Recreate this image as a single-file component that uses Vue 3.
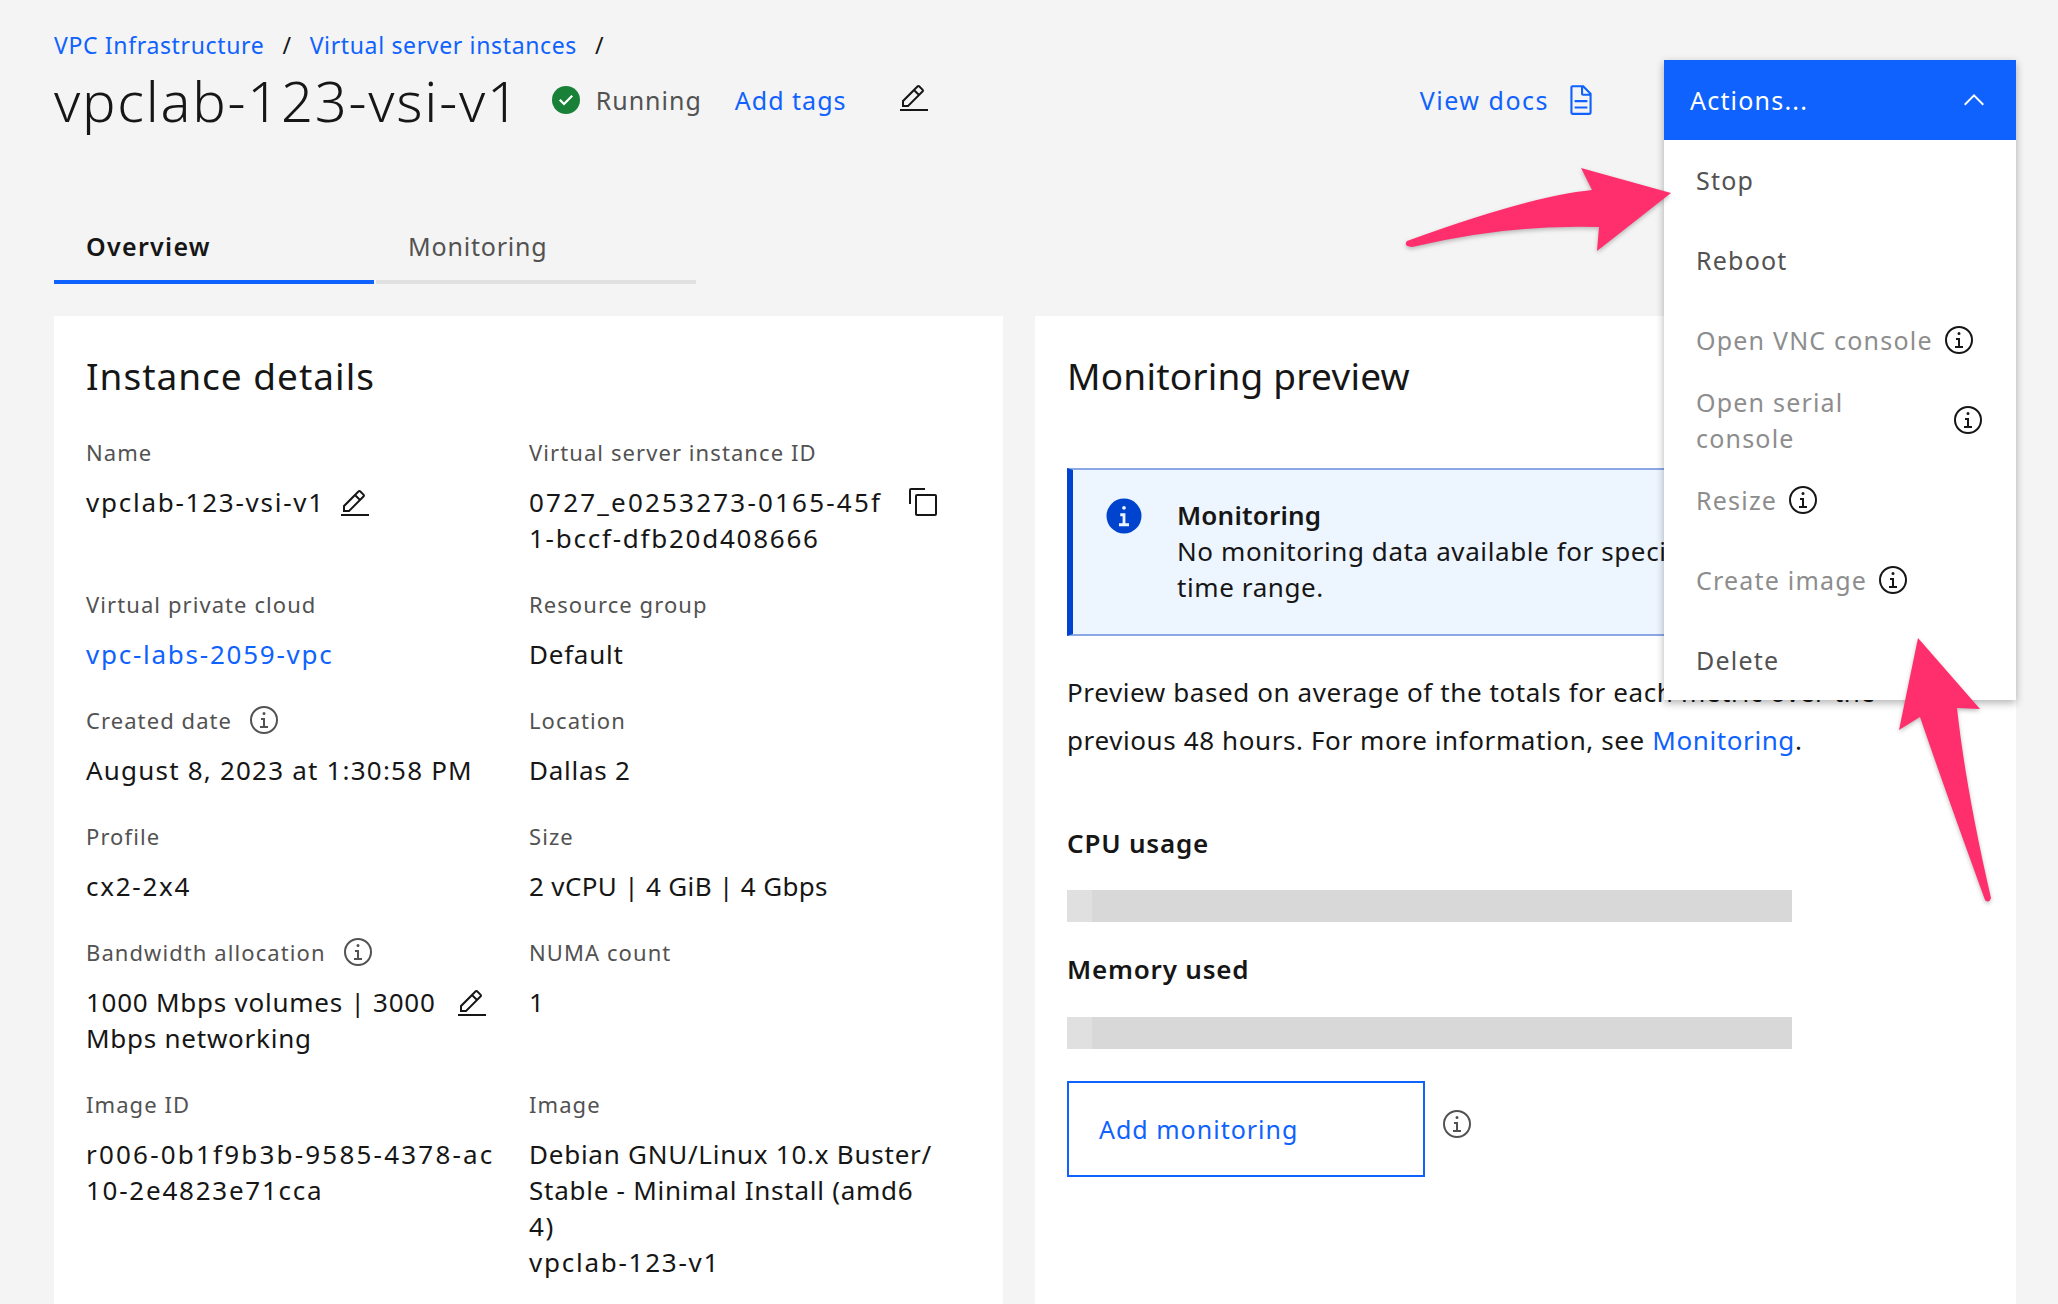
<template>
  <div class="page">
    <nav class="crumbs">
      <a>VPC Infrastructure</a><span class="sep">/</span><a>Virtual server instances</a><span class="sep">/</span>
    </nav>

    <div class="title-row">
      <h1>vpclab-123-vsi-v1</h1>
      <svg class="status-ic" viewBox="0 0 32 32">
        <circle cx="16" cy="16" r="14" fill="#198038" />
        <path fill="#fff" d="M14 21.5l-5-5 1.6-1.5 3.4 3.4 7.4-7.4 1.6 1.6z" />
      </svg>
      <span class="status">Running</span>
      <a class="tags">Add tags</a>
      <svg class="ic edit-top" viewBox="0 0 32 32"><path :d="icons.edit" /></svg>
      <a class="docs">View docs</a>
      <svg class="ic docs-ic" viewBox="0 0 32 32"><path :d="icons.doc" /></svg>
    </div>

    <div class="tabs">
      <div class="tab active">Overview</div>
      <div class="tab">Monitoring</div>
    </div>

    <div class="cards">
      <section class="card">
        <h2 class="h-wide">Instance details</h2>
        <div class="details">
          <div v-for="item in details" :key="item.label" class="field">
            <div class="label">
              {{ item.label }}
              <svg v-if="item.info" class="ic info-ic" viewBox="0 0 32 32"><path :d="icons.info" /></svg>
            </div>
            <div class="value" :class="{ link: item.link }">
              <template v-for="(line, i) in item.lines" :key="i">
                <br v-if="i > 0" /><span :class="item.tone || lineTone(line)">{{ line }}</span>
                <svg v-if="item.edit && i === 0" class="ic edit-ic" :class="item.edit" viewBox="0 0 32 32"><path :d="icons.edit" /></svg>
              </template>
              <svg v-if="item.copy" class="ic copy-ic" viewBox="0 0 32 32"><path :d="icons.copy" /></svg>
            </div>
          </div>
        </div>
      </section>

      <section class="card">
        <h2 class="h-narrow">Monitoring preview</h2>
        <div class="notice">
          <svg class="notice-ic" viewBox="0 0 32 32"><path :d="icons.infoFilled" /></svg>
          <div>
            <div class="notice-title">Monitoring</div>
            <div>No monitoring data available for specified<br />time range.</div>
          </div>
        </div>
        <p class="preview">
          Preview based on average of the totals for each metric over the<br />
          previous 48 hours. For more information, see <a>Monitoring</a>.
        </p>
        <h3 class="cpu">CPU usage</h3>
        <div class="bar"><span></span></div>
        <h3 class="mem">Memory used</h3>
        <div class="bar second"><span></span></div>
        <div class="add-row">
          <button class="add-btn">Add monitoring</button>
          <svg class="ic add-info" viewBox="0 0 32 32"><path :d="icons.info" /></svg>
        </div>
      </section>
    </div>

    <div class="dropdown">
      <div class="drop-head">
        <span>Actions...</span>
        <svg class="chev" viewBox="0 0 32 32"><path :d="icons.chevron" /></svg>
      </div>
      <div
        v-for="m in menu"
        :key="m.text"
        class="menu-item"
        :class="{ disabled: m.info, tall: m.tall }"
      >
        <span>{{ m.text }}<template v-if="m.tall"><br />{{ m.tall }}</template></span>
        <svg v-if="m.info" class="ic menu-ic" viewBox="0 0 32 32"><path :d="icons.info" /></svg>
      </div>
    </div>

    <svg class="arrows" viewBox="0 0 2058 1304">
      <path
        d="M1407 241 Q1530 196 1592 190 L1581 168 L1671 193 L1597 251 L1599 227 Q1510 224 1412 247 Q1403 246 1407 241 Z"
      />
      <path
        d="M1918 638 L1980 709 L1957 708 Q1966 790 1991 898 Q1989 904 1985 900 Q1945 790 1920 717 L1899 730 Z"
      />
    </svg>
  </div>
</template>

<script setup>
const icons = {
  info: 'M17 22v-8h-4v2h2v6h-3v2h8v-2h-3zM16 8a1.5 1.5 0 1 0 1.5 1.5A1.5 1.5 0 0 0 16 8zM16 30a14 14 0 1 1 14-14 14 14 0 0 1-14 14zm0-26a12 12 0 1 0 12 12A12 12 0 0 0 16 4z',
  infoFilled: 'M16 2a14 14 0 1 0 14 14A14 14 0 0 0 16 2zm0 6a1.5 1.5 0 1 1-1.5 1.5A1.5 1.5 0 0 1 16 8zm4 16.125h-8v-2.25h2.875v-5.75H13v-2.25h4.125v8H20z',
  edit: 'M2 26h28v2H2zM25.4 9c.8-.8.8-2 0-2.8l-3.6-3.6c-.8-.8-2-.8-2.8 0l-15 15V24h6.4l15-15zm-5-5L24 7.6l-3 3L17.4 7l3-3zM6 22v-3.6l10-10 3.6 3.6-10 10H6z',
  copy: 'M28 10v18H10V10h18m0-2H10a2 2 0 0 0-2 2v18a2 2 0 0 0 2 2h18a2 2 0 0 0 2-2V10a2 2 0 0 0-2-2zM4 18H2V4a2 2 0 0 1 2-2h14v2H4z',
  doc: 'M25.7 9.3l-7-7A.908.908 0 0 0 18 2H8a2.006 2.006 0 0 0-2 2v24a2.006 2.006 0 0 0 2 2h16a2.006 2.006 0 0 0 2-2V10a.908.908 0 0 0-.3-.7zM18 4.4l5.6 5.6H18zM24 28H8V4h8v6a2.006 2.006 0 0 0 2 2h6zM10 22h12v2H10zM10 16h12v2H10z',
  chevron: 'M16 10l10 10-1.4 1.4-8.6-8.6-8.6 8.6L6 20z',
}

// ids and hostnames run wider than plain words in the reference
const lineTone = (line) => {
  if (line.includes(' ')) return 'wordy'
  return line.length > 20 ? 'idlong' : 'idish'
}

const details = [
  { label: 'Name', lines: ['vpclab-123-vsi-v1'], edit: 'near' },
  { label: 'Virtual server instance ID', lines: ['0727_e0253273-0165-45f', '1-bccf-dfb20d408666'], copy: true },
  { label: 'Virtual private cloud', lines: ['vpc-labs-2059-vpc'], link: true },
  { label: 'Resource group', lines: ['Default'], tone: 'wordy' },
  { label: 'Created date', lines: ['August 8, 2023 at 1:30:58 PM'], tone: 'plain', info: true },
  { label: 'Location', lines: ['Dallas 2'] },
  { label: 'Profile', lines: ['cx2-2x4'] },
  { label: 'Size', lines: ['2 vCPU | 4 GiB | 4 Gbps'], tone: 'tight' },
  { label: 'Bandwidth allocation', lines: ['1000 Mbps volumes | 3000', 'Mbps networking'], info: true, edit: 'far' },
  { label: 'NUMA count', lines: ['1'] },
  { label: 'Image ID', lines: ['r006-0b1f9b3b-9585-4378-ac', '10-2e4823e71cca'] },
  { label: 'Image', lines: ['Debian GNU/Linux 10.x Buster/', 'Stable - Minimal Install (amd6', '4)', 'vpclab-123-v1'] },
]

const menu = [
  { text: 'Stop' },
  { text: 'Reboot' },
  { text: 'Open VNC console', info: true },
  { text: 'Open serial', tall: 'console', info: true },
  { text: 'Resize', info: true },
  { text: 'Create image', info: true },
  { text: 'Delete' },
]
</script>

<style>
html, body { margin: 0; background: #f4f4f4; }
</style>

<style scoped>
.page {
  position: relative;
  height: 1304px;
  overflow: hidden;
  box-sizing: border-box;
  padding: 31px 42px 0 54px;
  background: #f4f4f4;
  color: #161616;
  font-family: "Noto Sans", "Liberation Sans", sans-serif;
  font-size: 25px;
  letter-spacing: 1px;
  line-height: 36px;
}
a { color: #0f62fe; }
.ic { fill: currentColor; flex: none; }

.crumbs { height: 28px; line-height: 28px; font-size: 23px; letter-spacing: 0.65px; display: flex; }
.sep { margin: 0 18px; }
.sep:last-child { margin-right: 0; }

.title-row {
  display: flex;
  align-items: center;
  height: 70px;
  margin-top: 6px;
  padding-right: 418px;
}
h1 { margin: 0; font-size: 56px; font-weight: 300; letter-spacing: 1.75px; line-height: 70px; white-space: nowrap; }
.status-ic { width: 32px; height: 32px; margin-left: 29px; flex: none; }
.status { margin-left: 14px; color: #525252; }
.tags { margin-left: 33px; }
.edit-top { width: 32px; height: 32px; margin: 0 0 3px 51px; }
.docs { margin-left: auto; letter-spacing: 1.5px; }
.docs-ic { width: 34px; height: 34px; margin-left: 15px; color: #0f62fe; }

.tabs { display: flex; gap: 2px; margin-top: 81px; width: 642px; }
.tab {
  flex: 1;
  height: 64px;
  line-height: 60px;
  padding-left: 32px;
  border-bottom: 4px solid #e0e0e0;
  color: #525252;
  letter-spacing: 0.8px;
}
.tab.active { color: #161616; font-weight: 600; letter-spacing: 1.3px; border-bottom-color: #0f62fe; }

.cards { display: grid; grid-template-columns: 949px 981px; gap: 32px; margin-top: 32px; }
.card { background: #fff; height: 1100px; padding: 36px 32px 0; box-sizing: border-box; }
h2 { margin: 0; font-size: 37px; font-weight: 400; line-height: 48px; }
.h-wide { letter-spacing: 1px; }
.h-narrow { letter-spacing: 0.2px; }

.details {
  display: grid;
  grid-template-columns: 443px 1fr;
  row-gap: 35px;
  margin-top: 39px;
}
.label {
  display: flex;
  align-items: center;
  gap: 16px;
  height: 26px;
  line-height: 26px;
  font-size: 22px;
  letter-spacing: 1.08px;
  color: #525252;
}
.value { position: relative; margin-top: 19px; white-space: nowrap; font-size: 26px; }
.value.link { color: #0f62fe; }
.idish { letter-spacing: 1.75px; }
.idlong { letter-spacing: 2.2px; }
.wordy { letter-spacing: 0.75px; }
.plain { letter-spacing: 1.2px; }
.tight { letter-spacing: 0.35px; }
.info-ic { width: 32px; height: 32px; }
.edit-ic { width: 32px; height: 32px; vertical-align: -8px; }
.edit-ic.near { margin-left: 14px; }
.edit-ic.far { margin-left: 20px; }
.copy-ic { width: 32px; height: 32px; position: absolute; left: 378px; top: 2px; }

.notice {
  display: flex;
  height: 168px;
  margin-top: 68px;
  box-sizing: border-box;
  padding-top: 27px;
  background: #edf5ff;
  border: 2px solid #8aa8e6;
  border-left: 6px solid #0043ce;
  border-right: none;
  font-size: 26px;
  letter-spacing: 0.6px;
  white-space: nowrap;
}
.notice-ic { width: 40px; height: 40px; margin: -1px 33px 0 31px; fill: #0043ce; flex: none; }
.notice-title { font-weight: 600; letter-spacing: 0.2px; }

.preview { margin: 32px 0 0; font-size: 26px; letter-spacing: 0.6px; line-height: 48px; white-space: nowrap; }
h3 { margin: 0; font-size: 26px; font-weight: 600; letter-spacing: 0.8px; line-height: 36px; }
.cpu { margin-top: 61px; }
.mem { margin-top: 29px; }
.bar { height: 32px; width: 725px; margin-top: 29px; background: #d8d8d8; }
.bar.second { margin-top: 30px; }
.bar span { display: block; width: 25px; height: 100%; background: #e0e0e0; }
.add-row { display: flex; margin-top: 32px; }
.add-btn {
  width: 358px;
  height: 96px;
  box-sizing: border-box;
  padding: 0 0 0 30px;
  text-align: left;
  background: #fff;
  border: 2px solid #0f62fe;
  color: #0f62fe;
  font: inherit;
  letter-spacing: inherit;
}
.add-info { width: 32px; height: 32px; margin: 27px 0 0 16px; color: #525252; }

.dropdown {
  position: absolute;
  top: 60px;
  right: 42px;
  width: 352px;
  height: 640px;
  background: #fff;
  box-shadow: 0 3px 8px rgba(0, 0, 0, 0.3);
  z-index: 2;
  letter-spacing: 1.2px;
}
.drop-head {
  display: flex;
  align-items: center;
  justify-content: space-between;
  height: 80px;
  padding: 0 26px 0 26px;
  background: #0f62fe;
  color: #fff;
}
.chev { width: 32px; height: 32px; fill: #fff; }
.menu-item {
  display: flex;
  align-items: center;
  gap: 10px;
  height: 80px;
  box-sizing: border-box;
  padding: 0 0 1px 32px;
  color: #525252;
}
.menu-item.disabled { color: #8d8d8d; }
.menu-item.tall { justify-content: space-between; padding-right: 32px; }
.menu-ic { width: 32px; height: 32px; color: #161616; }

.arrows { position: absolute; left: 0; top: 0; width: 2058px; height: 1304px; z-index: 3; pointer-events: none; }
.arrows path { fill: #ff2e6c; filter: drop-shadow(0 2px 2px rgba(0, 0, 0, 0.25)); }
</style>
